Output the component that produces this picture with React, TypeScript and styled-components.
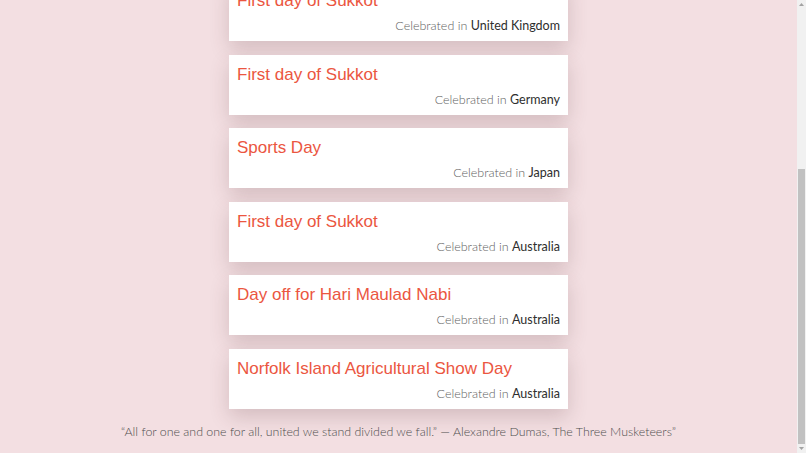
import React, { useLayoutEffect } from "react";
import styled, { createGlobalStyle } from "styled-components";

const Global = createGlobalStyle`
  html, body { margin: 0; padding: 0; }
  body {
    background: #f3dfe2;
    font-family: Lato, "Open Sans", sans-serif;
  }
`;

const Page = styled.main`
  display: flex;
  flex-direction: column;
  align-items: center;
  padding: 253px 9px 12px 0;
`;

const List = styled.ul`
  list-style: none;
  margin: 0;
  padding: 0;
  width: 339px;
  display: flex;
  flex-direction: column;
  gap: 13.5px;
`;

const Card = styled.li`
  background: #ffffff;
  height: 60px;
  box-sizing: border-box;
  padding: 9px 8px 6px 8px;
  display: flex;
  flex-direction: column;
  justify-content: space-between;
  box-shadow: 0 8px 20px rgba(90, 50, 55, 0.2);
`;

const Title = styled.h2`
  margin: 0;
  font-family: "Liberation Sans", Arial, sans-serif;
  font-weight: 400;
  font-size: 17px;
  line-height: 21px;
  color: #eb5641;
`;

const Where = styled.p`
  margin: 0;
  text-align: right;
  font-size: 12.5px;
  line-height: 18px;
  font-weight: 300;
  color: #5e5e5e;
`;

const Country = styled.span`
  color: #2e2e2e;
  font-weight: 400;
`;

const Quote = styled.p`
  margin: 14px 0 0;
  font-size: 12.4px;
  line-height: 18px;
  font-weight: 300;
  color: #4e4e4e;
  text-align: center;
`;

const Scrollbar = styled.div`
  position: fixed;
  top: 0;
  right: 0;
  bottom: 0;
  width: 9px;
  background: #f1f1f1;
  display: flex;
  flex-direction: column;
  align-items: center;
  justify-content: space-between;
  padding: 3px 0;
  box-sizing: border-box;
`;

const Thumb = styled.div`
  position: absolute;
  left: 1px;
  right: 1px;
  top: 169px;
  bottom: 9px;
  background: #c1c1c1;
`;

const Arrow = styled.svg`
  width: 5px;
  height: 3px;
  display: block;
`;

const holidays = [
  { name: "First day of Sukkot", country: "United Kingdom" },
  { name: "First day of Sukkot", country: "Germany" },
  { name: "Sports Day", country: "Japan" },
  { name: "First day of Sukkot", country: "Australia" },
  { name: "Day off for Hari Maulad Nabi", country: "Australia" },
  { name: "Norfolk Island Agricultural Show Day", country: "Australia" },
];

export default function App() {
  useLayoutEffect(() => {
    window.scrollTo(0, document.documentElement.scrollHeight);
  }, []);
  return (
    <>
      <Global />
      <Page>
        <List>
          {holidays.map((h, i) => (
            <Card key={i}>
              <Title>{h.name}</Title>
              <Where>
                Celebrated in <Country>{h.country}</Country>
              </Where>
            </Card>
          ))}
        </List>
        <Quote>
          “All for one and one for all, united we stand divided we fall.” — Alexandre Dumas, The Three Musketeers”
        </Quote>
      </Page>
      <Scrollbar aria-hidden="true">
        <Arrow viewBox="0 0 5 3">
          <polygon points="2.5,0 5,3 0,3" fill="#a3a3a3" />
        </Arrow>
        <Thumb />
        <Arrow viewBox="0 0 5 3">
          <polygon points="0,0 5,0 2.5,3" fill="#a3a3a3" />
        </Arrow>
      </Scrollbar>
    </>
  );
}
